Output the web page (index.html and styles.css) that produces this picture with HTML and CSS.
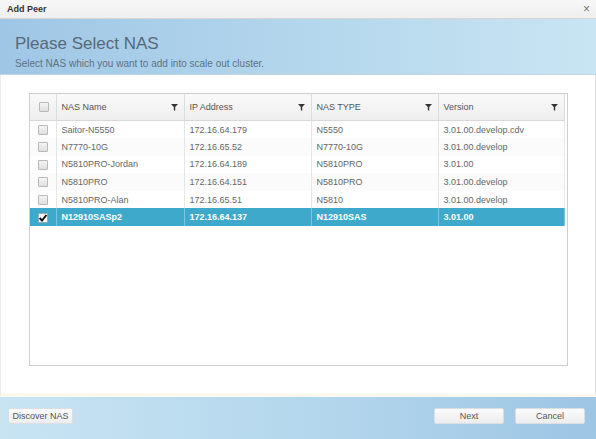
FILE: index.html
```html
<!DOCTYPE html>
<html>
<head>
<meta charset="utf-8">
<link rel="stylesheet" href="styles.css">
</head>
<body>
<div class="dialog">
  <div class="titlebar">
    <span class="title">Add Peer</span>
    <span class="close">×</span>
  </div>
  <div class="banner">
    <div class="banner-title">Please Select NAS</div>
    <div class="banner-sub">Select NAS which you want to add into scale out cluster.</div>
  </div>
  <div class="content">
    <div class="grid">
      <table>
        <colgroup>
          <col class="c-check"><col class="c-name"><col class="c-ip"><col class="c-type"><col class="c-ver">
        </colgroup>
        <thead>
          <tr>
            <th class="chk"><span class="cb"></span></th>
            <th><div class="hd"><span>NAS Name</span><svg class="filter" viewBox="0 0 7 7"><path d="M0 0H7L4.2 3V7L2.8 6V3Z"/></svg></div></th>
            <th><div class="hd"><span>IP Address</span><svg class="filter" viewBox="0 0 7 7"><path d="M0 0H7L4.2 3V7L2.8 6V3Z"/></svg></div></th>
            <th><div class="hd"><span>NAS TYPE</span><svg class="filter" viewBox="0 0 7 7"><path d="M0 0H7L4.2 3V7L2.8 6V3Z"/></svg></div></th>
            <th><div class="hd"><span>Version</span><svg class="filter" viewBox="0 0 7 7"><path d="M0 0H7L4.2 3V7L2.8 6V3Z"/></svg></div></th>
          </tr>
        </thead>
        <tbody>
          <tr><td class="chk"><span class="cb"></span></td><td>Saitor-N5550</td><td>172.16.64.179</td><td>N5550</td><td>3.01.00.develop.cdv</td></tr>
          <tr class="alt"><td class="chk"><span class="cb"></span></td><td>N7770-10G</td><td>172.16.65.52</td><td>N7770-10G</td><td>3.01.00.develop</td></tr>
          <tr><td class="chk"><span class="cb"></span></td><td>N5810PRO-Jordan</td><td>172.16.64.189</td><td>N5810PRO</td><td>3.01.00</td></tr>
          <tr class="alt"><td class="chk"><span class="cb"></span></td><td>N5810PRO</td><td>172.16.64.151</td><td>N5810PRO</td><td>3.01.00.develop</td></tr>
          <tr><td class="chk"><span class="cb"></span></td><td>N5810PRO-Alan</td><td>172.16.65.51</td><td>N5810</td><td>3.01.00.develop</td></tr>
          <tr class="sel"><td class="chk"><span class="cb checked"><svg viewBox="0 0 9 9"><path d="M1.5 4.5L3.6 6.8L7.6 1.8" /></svg></span></td><td>N12910SASp2</td><td>172.16.64.137</td><td>N12910SAS</td><td>3.01.00</td></tr>
        </tbody>
      </table>
    </div>
  </div>
  <div class="footer">
    <button class="btn btn-discover">Discover NAS</button>
    <div class="right-btns">
      <button class="btn btn-wide">Next</button>
      <button class="btn btn-wide">Cancel</button>
    </div>
  </div>
</div>
</body>
</html>
```

FILE: styles.css
```css
html, body {
  margin: 0;
  padding: 0;
  background: #ffffff;
}
body {
  font-family: "Liberation Sans", Arial, sans-serif;
}
.dialog {
  width: 596px;
  height: 439px;
  display: flex;
  flex-direction: column;
  overflow: hidden;
}
.titlebar {
  height: 18px;
  background: linear-gradient(#f7f7f7, #efefef);
  border-bottom: 1px solid #d6d6d6;
  display: flex;
  align-items: center;
  justify-content: space-between;
  padding: 0 7px;
  flex: none;
}
.title {
  font-size: 9px;
  font-weight: bold;
  color: #333;
}
.close {
  font-size: 12px;
  color: #777;
  line-height: 1;
  margin-right: -1px;
}
.banner {
  flex: none;
  background: linear-gradient(to right, #9fc6e5 0%, #b3d6ec 50%, #c9e5f3 100%);
  border-bottom: 1px solid #c3d5df;
  padding-left: 15px;
  box-sizing: border-box;
  height: 56px;
  padding-top: 15px;
}
.banner-title {
  font-size: 17px;
  color: #56697a;
  line-height: 20px;
}
.banner-sub {
  font-size: 10px;
  color: #5f7282;
  line-height: 12px;
  margin-top: 4px;
}
.content {
  flex: 1;
  background: #fff;
  padding: 18px 27px 0 28px;
  border-left: 1px solid #ececec;
  border-right: 1px solid #e2e2e2;
  border-bottom: 4px solid #fdf9ee;
  box-sizing: border-box;
}
.grid {
  width: 539px;
  height: 273px;
  border: 1px solid #cfcfcf;
  box-sizing: border-box;
  background: #fff;
}
table {
  border-collapse: collapse;
  table-layout: fixed;
  width: 534px;
  font-size: 9px;
}
.c-check { width: 26px; }
.c-name { width: 128px; }
.c-ip { width: 127px; }
.c-type { width: 127px; }
.c-ver { width: 126px; }
th {
  height: 26px;
  background: linear-gradient(#f9f9f9, #eeeeee);
  border-right: 1px solid #dcdcdc;
  border-bottom: 1px solid #d8d8d8;
  font-weight: normal;
  color: #555;
  text-align: left;
  padding: 0 6px 0 5px;
}
th:first-child { padding: 0; }
.hd {
  display: flex;
  align-items: center;
  justify-content: space-between;
}
.filter {
  width: 7px;
  height: 7px;
  fill: #333;
}
tbody tr { height: 17.6px; }
td {
  padding: 0 5px;
  line-height: 10px;
  color: #666;
  border-right: 1px solid #e6e6e6;
  white-space: nowrap;
  overflow: hidden;
}
td.chk, th.chk {
  padding: 0;
  text-align: center;
}
.cb {
  display: inline-block;
  width: 8px;
  height: 8px;
  border: 1px solid #b9b9b9;
  background: linear-gradient(#f4f4f4, #e0e0e0);
  vertical-align: middle;
  position: relative;
  border-radius: 1px;
}
th .cb { margin-left: 3px; }
td .cb { margin-left: 1px; }
.cb.checked {
  background: #f6f6f6;
  border-color: #9aa;
}
.cb svg {
  position: absolute;
  left: -1px;
  top: -1px;
  width: 10px;
  height: 10px;
  fill: none;
  stroke: #111;
  stroke-width: 1.8;
}
tr.alt td { background: #fbfbfb; }
tr.sel td {
  background: #3ea9cb;
  color: #fff;
  font-weight: bold;
  border-right-color: #7cc6dc;
}
.footer {
  height: 42px;
  flex: none;
  background: linear-gradient(to right, #c8e4f3 0%, #b3d6ec 55%, #9dc5e4 100%);
  display: flex;
  align-items: flex-start;
  justify-content: space-between;
  padding: 11px 11px 0 8px;
  box-sizing: border-box;
}
.btn {
  font-family: "Liberation Sans", Arial, sans-serif;
  font-size: 9px;
  color: #555;
  height: 16px;
  padding: 0;
  border: 1px solid #d9dfe3;
  border-radius: 2px;
  background: linear-gradient(#fbfbfb, #ededed);
}
.btn-discover { width: 65px; }
.right-btns {
  display: flex;
  gap: 11px;
}
.btn-wide { width: 70px; }
```
